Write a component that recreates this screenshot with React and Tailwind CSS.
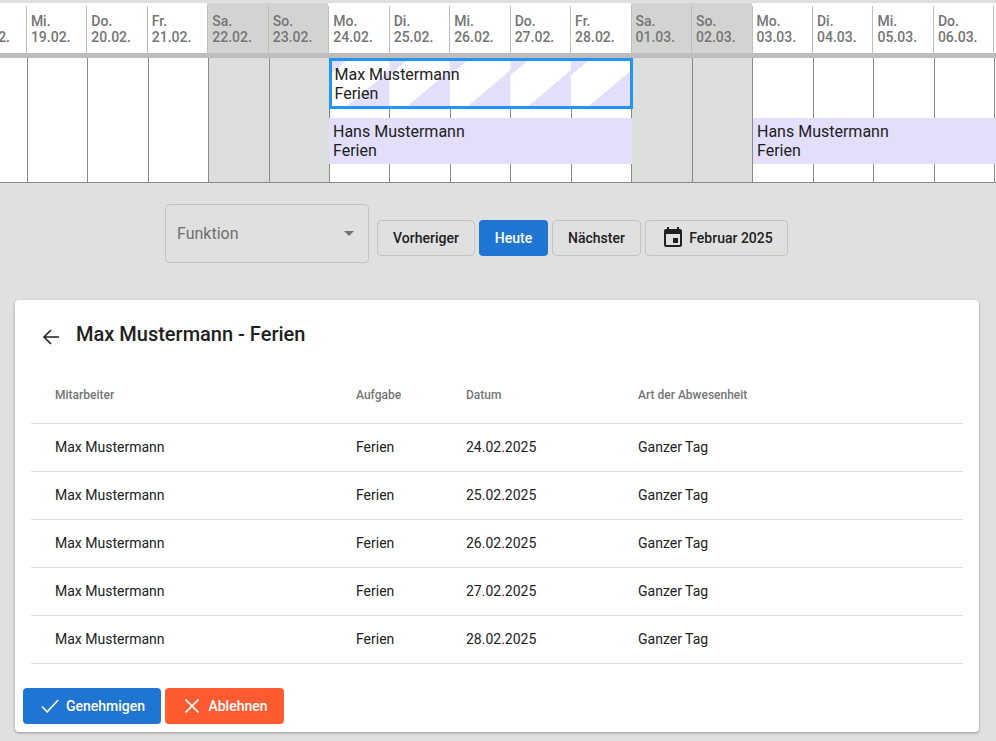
import { MdEvent } from "react-icons/md";

const DAYS = [
  ["Di.", "18.02."],
  ["Mi.", "19.02."],
  ["Do.", "20.02."],
  ["Fr.", "21.02."],
  ["Sa.", "22.02.", true],
  ["So.", "23.02.", true],
  ["Mo.", "24.02."],
  ["Di.", "25.02."],
  ["Mi.", "26.02."],
  ["Do.", "27.02."],
  ["Fr.", "28.02."],
  ["Sa.", "01.03.", true],
  ["So.", "02.03.", true],
  ["Mo.", "03.03."],
  ["Di.", "04.03."],
  ["Mi.", "05.03."],
  ["Do.", "06.03."],
  ["Fr.", "07.03."],
];

const ROWS = ["24.02.2025", "25.02.2025", "26.02.2025", "27.02.2025", "28.02.2025"];

const TABLE_COLS = "grid grid-cols-[301px_110px_172px_1fr] items-center pl-[24px]";

function Calendar() {
  return (
    <div className="relative overflow-hidden pt-[3px]">
      <div className="flex -ml-[34.6px] h-[50px] bg-white">
        {DAYS.map(([day, date, weekend]) => (
          <div
            key={date}
            className={`w-[60.47px] shrink-0 pt-[3px] ${weekend ? "bg-[#d3d4d2]" : ""}`}
          >
            <div className="h-full border-l border-[#bdbdbd] pl-[4px] pt-[7px] text-[14px] leading-[16px] font-medium text-[#757575]">
              <div>{day}</div>
              <div>{date}</div>
            </div>
          </div>
        ))}
      </div>
      <div className="h-[5px] bg-[#bdbdbd]" />
      <div className="relative h-[125px] border-b border-[#8a8a8a] bg-white">
        <div className="flex -ml-[33.8px] h-full">
          {DAYS.map(([day, date, weekend]) => (
            <div
              key={date}
              className={`w-[60.47px] shrink-0 border-l border-[#8a8a8a] ${weekend ? "bg-[#dcdedc]" : ""}`}
            />
          ))}
        </div>
        <div className="absolute left-[328.5px] top-0 h-[51px] w-[304.5px] border-[3px] border-[#2393f5] bg-[linear-gradient(to_bottom_right,#e3dffb_0_17%,#ffffff_17%_62%,#e3dffb_62%)] bg-[length:60.47px_100%] bg-origin-border pl-[3px] pt-[4px] text-[16px] leading-[19px] text-[#212121]">
          <div>Max Mustermann</div>
          <div>Ferien</div>
        </div>
        <div className="absolute left-[329px] top-[60px] h-[46px] w-[303px] bg-[#e3dffb] pl-[4px] pt-[4px] text-[16px] leading-[19px] text-[#212121]">
          <div>Hans Mustermann</div>
          <div>Ferien</div>
        </div>
        <div className="absolute left-[753px] top-[60px] h-[46px] w-[243px] bg-[#e3dffb] pl-[4px] pt-[4px] text-[16px] leading-[19px] text-[#212121]">
          <div>Hans Mustermann</div>
          <div>Ferien</div>
        </div>
      </div>
    </div>
  );
}

function Toolbar() {
  const btn =
    "flex h-[36px] items-center justify-center rounded-[4px] border border-[#c4c4c4] text-[14px] font-medium text-[#212121]";
  return (
    <div className="mt-[21px] ml-[165px] flex items-start gap-[4px]">
      <div className="mr-[4px] flex h-[59px] w-[204px] items-center justify-between rounded-[4px] border border-[#c4c4c4] pl-[11px] pr-[14px] text-[16px] text-[#6e6e6e]">
        <span>Funktion</span>
        <div className="h-0 w-0 border-x-[5px] border-t-[5px] border-x-transparent border-t-[#757575]" />
      </div>
      <div className="mt-[16px] flex gap-[4px]">
        <button className={`${btn} w-[98px]`}>Vorheriger</button>
        <button className="flex h-[36px] w-[69px] items-center justify-center rounded-[4px] bg-[#1f75d2] text-[14px] font-medium text-white">
          Heute
        </button>
        <button className={`${btn} w-[89px]`}>Nächster</button>
        <button className={`${btn} w-[143px] gap-[4px]`}>
          <MdEvent size={24} className="ml-[1px]" />
          Februar 2025
        </button>
      </div>
    </div>
  );
}

function DetailCard() {
  return (
    <div className="ml-[15px] mr-[17px] mt-[37px] rounded-[4px] bg-white pb-[8px] shadow-[0_1px_3px_rgba(0,0,0,0.35)]">
      <div className="flex h-[71px] items-center pb-[3px] pl-[27px]">
        <svg width="18" height="18" viewBox="0 0 18 18" fill="none" stroke="#212121" strokeWidth="1.6" className="mt-[5px]">
          <path d="M17 9H2M9 2L2 9l7 7" />
        </svg>
        <h2 className="ml-[16px] text-[20px] font-medium text-[#212121]">Max Mustermann - Ferien</h2>
      </div>
      <div className="mx-[16px]">
        <div className={`${TABLE_COLS} h-[53px] border-b border-[#e0e0e0] pb-[5px] text-[12px] font-medium text-[#757575]`}>
          <div>Mitarbeiter</div>
          <div>Aufgabe</div>
          <div>Datum</div>
          <div>Art der Abwesenheit</div>
        </div>
        {ROWS.map((date) => (
          <div key={date} className={`${TABLE_COLS} h-[48px] border-b border-[#e0e0e0] text-[14px] text-[#212121]`}>
            <div>Max Mustermann</div>
            <div>Ferien</div>
            <div>{date}</div>
            <div>Ganzer Tag</div>
          </div>
        ))}
      </div>
      <div className="ml-[8px] mt-[24px] flex gap-[4px]">
        <button className="flex h-[36px] w-[138px] items-center justify-center gap-[7px] rounded-[4px] bg-[#1f75d2] pl-[2px] text-[14px] font-medium text-white">
          <svg width="18" height="14" viewBox="0 0 18 14" fill="none" stroke="#ffffff" strokeWidth="1.6">
            <path d="M1 7.5L6.2 12.8 17.2 1" />
          </svg>
          Genehmigen
        </button>
        <button className="flex h-[36px] w-[119px] items-center justify-center gap-[9px] rounded-[4px] bg-[#ff5a30] pl-[4px] text-[14px] font-medium text-white">
          <svg width="14" height="14" viewBox="0 0 14 14" fill="none" stroke="#ffffff" strokeWidth="1.6">
            <path d="M0.5 0.5L13.5 13.5M13.5 0.5L0.5 13.5" />
          </svg>
          Ablehnen
        </button>
      </div>
    </div>
  );
}

export default function App() {
  return (
    <div className="min-h-screen overflow-hidden bg-[#e0e0e0] font-['Roboto',sans-serif]">
      <Calendar />
      <Toolbar />
      <DetailCard />
    </div>
  );
}
